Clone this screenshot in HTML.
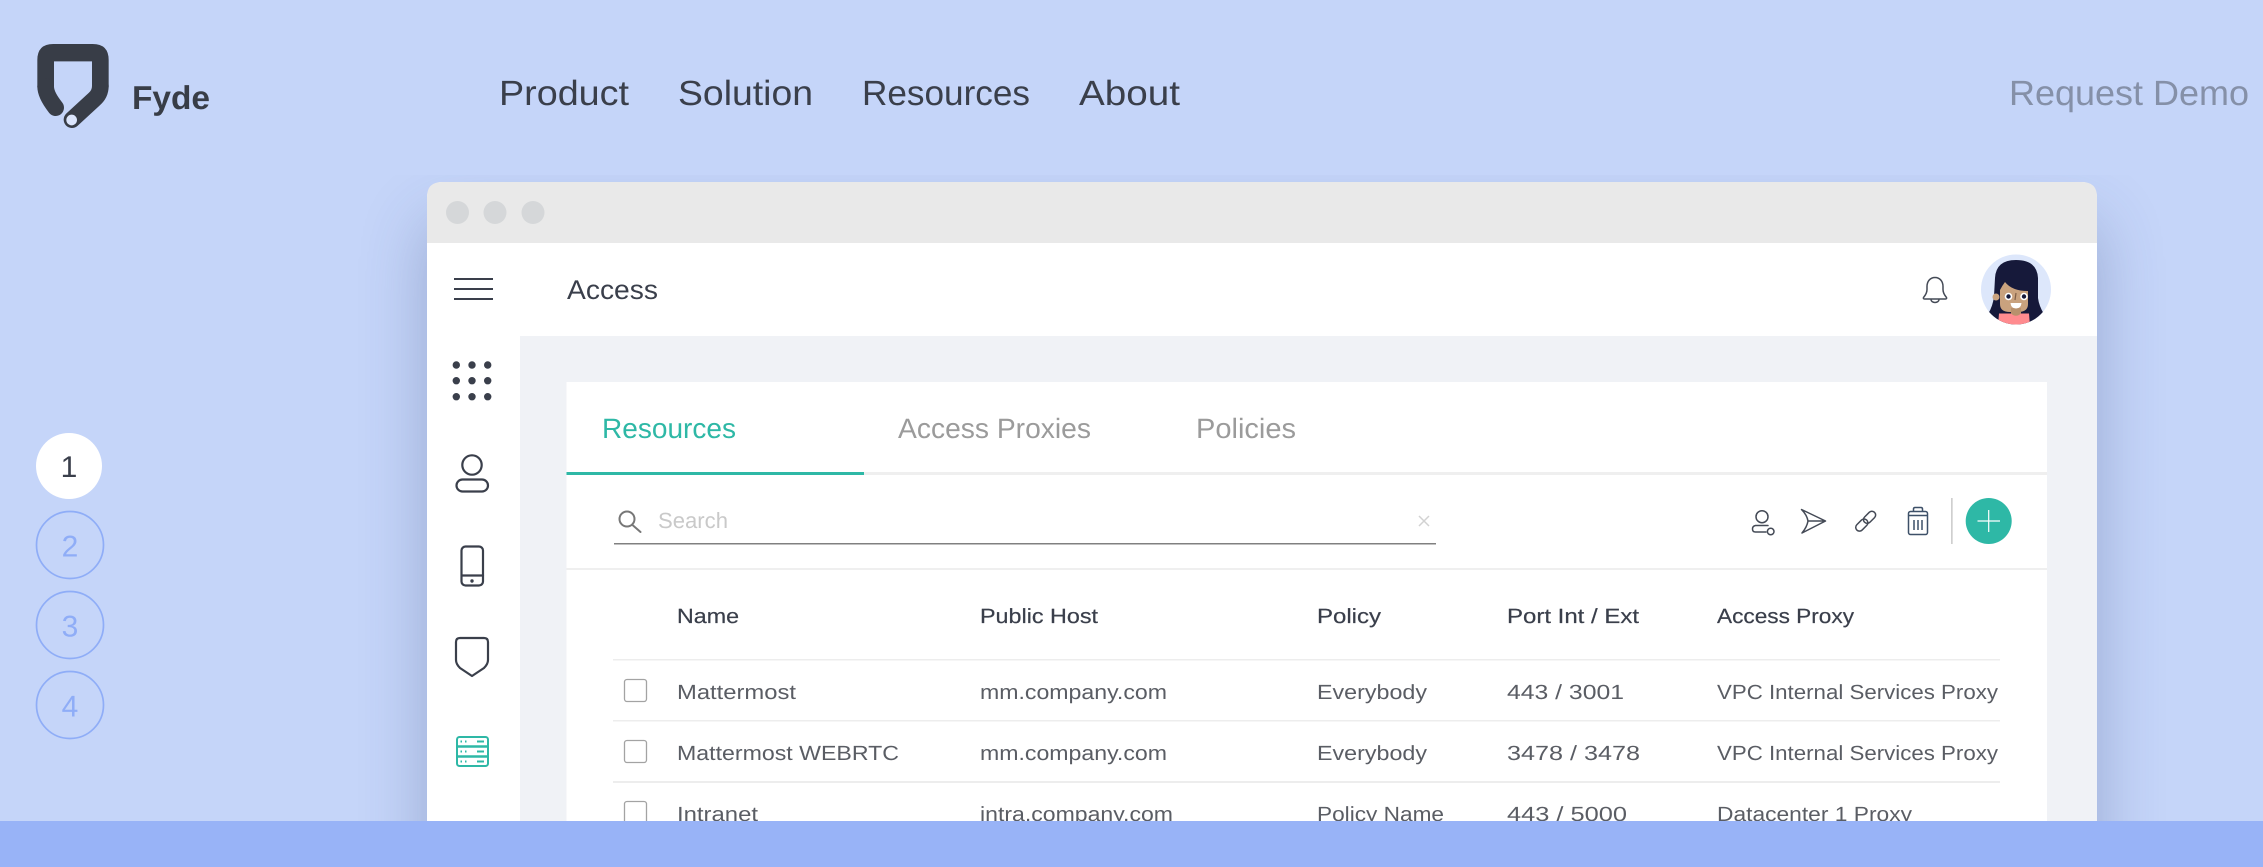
<!DOCTYPE html>
<html lang="en">
<head>
<meta charset="utf-8">
<title>Fyde</title>
<style>
html,body{margin:0;padding:0;width:2263px;height:867px;overflow:hidden;background:#c5d5f9;font-family:"Liberation Sans",sans-serif}
#root{position:relative;width:2263px;height:867px;overflow:hidden;background:#c5d5f9}
#clip{position:absolute;left:0;top:175px;width:2263px;height:692px;overflow:hidden}
#win{position:absolute;left:427px;top:7px;width:1670px;height:685px;border-radius:15px 15px 0 0;background:#fff;box-shadow:0 40px 66px rgba(50,65,120,.3)}
svg{position:absolute;left:0;top:0}
text{font-family:"Liberation Sans",sans-serif;text-rendering:geometricPrecision}
.nav{font-size:35px;fill:#3a3f4b}
.th{font-size:20.500px;fill:#3a3f4b;stroke:#3a3f4b;stroke-width:.2}
.td{font-size:20.500px;fill:#5a5d64}
.tab{font-size:28px;fill:#9b9b9b}
.ic{fill:none;stroke:#3a3f4b;stroke-width:2.200;stroke-linejoin:round;stroke-linecap:round}
.ti{fill:none;stroke:#444a56;stroke-width:1.500;stroke-linejoin:round;stroke-linecap:round}
.step{font-size:30px;fill:#8fadf7;text-anchor:middle}
</style>
</head>
<body>
<div id="root">
<div id="clip"><div id="win"></div></div>
<svg width="2263" height="867" viewBox="0 0 2263 867" xmlns="http://www.w3.org/2000/svg">
  <!-- Logo -->
  <g transform="translate(20 30) scale(.33333)">
    <path fill="#383d47" d="M100 42H218Q266 42 266 90V172H216V94H102V172H52V90Q52 42 100 42Z"/>
    <path fill="none" stroke="#383d47" stroke-width="50" stroke-linecap="round" d="M77 170Q77 195 107 233"/>
    <path fill="none" stroke="#383d47" stroke-width="50" stroke-linecap="round" d="M241 168Q241 192 222 208L156 269"/>
    <circle cx="155" cy="270" r="16" fill="#dbe5fc"/>
  </g>
  <text x="132" y="109" font-size="33" font-weight="700" fill="#383d47" textLength="78" lengthAdjust="spacingAndGlyphs">Fyde</text>

  <!-- Nav -->
  <text class="nav" x="499" y="105" textLength="130" lengthAdjust="spacingAndGlyphs">Product</text>
  <text class="nav" x="678" y="105" textLength="135" lengthAdjust="spacingAndGlyphs">Solution</text>
  <text class="nav" x="862" y="105" textLength="168" lengthAdjust="spacingAndGlyphs">Resources</text>
  <text class="nav" x="1079" y="105" textLength="101" lengthAdjust="spacingAndGlyphs">About</text>
  <text x="2009" y="105" font-size="35" fill="#8590a8" textLength="240" lengthAdjust="spacingAndGlyphs">Request Demo</text>

  <!-- Steps -->
  <circle cx="69" cy="466" r="33" fill="#fff"/>
  <text x="69" y="477" font-size="30" text-anchor="middle" fill="#3a3f4b">1</text>
  <g fill="none" stroke="#8fadf7" stroke-width="1.700">
    <circle cx="70" cy="545" r="33.500"/>
    <circle cx="70" cy="625" r="33.500"/>
    <circle cx="70" cy="705" r="33.500"/>
  </g>
  <text class="step" x="70" y="556.500">2</text>
  <text class="step" x="70" y="636.500">3</text>
  <text class="step" x="70" y="716.500">4</text>

  <!-- Window chrome -->
  <path d="M427 243V197Q427 182 442 182H2082Q2097 182 2097 197V243Z" fill="#e9e9e9"/>
  <circle cx="457.500" cy="212.500" r="11.500" fill="#d5d7d9"/>
  <circle cx="495" cy="212.500" r="11.500" fill="#d5d7d9"/>
  <circle cx="533" cy="212.500" r="11.500" fill="#d5d7d9"/>

  <!-- Content bg -->
  <rect x="520" y="336" width="1577" height="500" fill="#f0f2f6"/>
  <rect x="566.500" y="382" width="1480.500" height="460" fill="#fff"/>

  <!-- Header -->
  <g stroke="#3a3f4b" stroke-width="2">
    <path d="M454 279H493M454 289H493M454 299H493"/>
  </g>
  <text x="567" y="299" font-size="27" fill="#3a3f4b" textLength="91" lengthAdjust="spacingAndGlyphs">Access</text>

  <!-- Bell -->
  <path class="ti" d="M1935 277.500c-5 0-8 4-8 9v3c0 4-2 6-3.500 8q-.5 1.500 1 1.500h21q1.500 0 1-1.500c-1.500-2-3.500-4-3.500-8v-3c0-5-3-9-8-9zM1931 299.500a4 3 0 0 0 8 0"/>

  <!-- Avatar -->
  <clipPath id="av"><circle cx="2016" cy="289.500" r="35"/></clipPath>
  <circle cx="2016" cy="289.500" r="35" fill="#dde7fb"/>
  <g clip-path="url(#av)">
    <path fill="#16193a" d="M1995 278Q1996 260 2016 260Q2037 260 2038 278V298Q2039 306 2044 314L2040 328H1990L1988 314Q1993 306 1994 296Z"/>
    <circle cx="1996" cy="297" r="3.500" fill="#c9a27e"/>
    <path fill="#c9a27e" d="M2000 290Q2002 286 2005 282Q2012 291 2028 291V304Q2028 312 2018 312H2010Q2000 312 2000 304Z"/>
    <rect x="2011" y="308" width="10" height="9" fill="#b8916d"/>
    <path fill="#ff8b8f" d="M1999 313.500H2011Q2016 318 2021 313.500H2029L2030 326H1998Z"/>
    <circle cx="2008.500" cy="296.500" r="3.800" fill="#fff"/><circle cx="2024" cy="296.500" r="3.800" fill="#fff"/>
    <circle cx="2008.500" cy="296.500" r="2.200" fill="#16193a"/><circle cx="2024" cy="296.500" r="2.200" fill="#16193a"/>
    <path d="M2016 293L2015 300" stroke="#7f5f47" stroke-width="1.200" fill="none"/>
    <path d="M2010.500 303H2021.500Q2021 308.500 2016 308.500Q2011 308.500 2010.500 303Z" fill="#fff"/>
  </g>

  <!-- Sidebar -->
  <g fill="#3a3f4b">
    <circle cx="456.300" cy="365" r="3.700"/><circle cx="472" cy="365" r="3.700"/><circle cx="487.700" cy="365" r="3.700"/>
    <circle cx="456.300" cy="380.700" r="3.700"/><circle cx="472" cy="380.700" r="3.700"/><circle cx="487.700" cy="380.700" r="3.700"/>
    <circle cx="456.300" cy="396.700" r="3.700"/><circle cx="472" cy="396.700" r="3.700"/><circle cx="487.700" cy="396.700" r="3.700"/>
  </g>
  <circle class="ic" cx="472" cy="465" r="9.700"/>
  <rect class="ic" x="456.500" y="479.500" width="31.500" height="12" rx="6"/>
  <rect class="ic" x="461.500" y="546.500" width="21.500" height="39" rx="4"/>
  <path class="ic" d="M462 575.500H483"/>
  <circle cx="472" cy="581" r="1.700" fill="#3a3f4b"/>
  <path class="ic" d="M460 638H484Q488 638 488 642V660Q488 664 484 668L472 676L460 668Q456 664 456 660V642Q456 638 460 638Z"/>
  <g fill="none" stroke="#2eb8a6" stroke-width="2">
    <rect x="457" y="737" width="31" height="29" rx="2.500"/>
    <path d="M457 746.500H488M457 756.500H488" stroke-width="2.500"/>
    <path d="M460.500 741.500h1.500M465 741.500h1.500M477 741.500h7M460.500 751.500h1.500M465 751.500h1.500M477 751.500h7M460.500 761.500h1.500M465 761.500h1.500M477 761.500h7"/>
  </g>

  <!-- Tabs -->
  <text x="602" y="438" font-size="28" fill="#2eb8a6" textLength="134" lengthAdjust="spacingAndGlyphs">Resources</text>
  <text class="tab" x="898" y="438" textLength="193" lengthAdjust="spacingAndGlyphs">Access Proxies</text>
  <text class="tab" x="1196" y="438" textLength="100" lengthAdjust="spacingAndGlyphs">Policies</text>
  <rect x="566.500" y="472" width="1480.500" height="3" fill="#efefef"/>
  <rect x="566.500" y="472" width="297.500" height="3" fill="#2eb8a6"/>

  <!-- Search -->
  <g fill="none" stroke="#777" stroke-width="2" stroke-linecap="round">
    <circle cx="627" cy="519" r="7.500"/><path d="M632.500 525L640.500 532"/>
  </g>
  <text x="658" y="528" font-size="22" fill="#c9c9c9" textLength="70" lengthAdjust="spacingAndGlyphs">Search</text>
  <path d="M1419 516L1429 526M1429 516L1419 526" stroke="#d2d2d2" stroke-width="1.500"/>
  <rect x="614" y="543" width="822" height="1.500" fill="#808080"/>

  <!-- Toolbar -->
  <circle class="ti" cx="1762" cy="516.700" r="6"/>
  <path class="ti" d="M1766 532H1755.500Q1752.500 532 1752.500 529T1755.500 525.500H1768"/>
  <circle class="ti" cx="1770.700" cy="531.500" r="3.300"/>
  <path class="ti" d="M1801.500 509.500L1825.500 521L1802 533Q1807 527 1808 521Q1807 515 1801.500 509.500ZM1808 521H1825.500"/>
  <g class="ti" transform="rotate(-45 1865.500 521)">
    <rect x="1853" y="517.500" width="14" height="7.500" rx="3.700"/>
    <rect x="1864" y="517.500" width="14" height="7.500" rx="3.700"/>
  </g>
  <g fill="none" stroke="#3d5068" stroke-width="1.500" stroke-linejoin="round">
    <rect x="1908.500" y="511.500" width="19" height="23" rx="2"/>
    <path d="M1913.500 511V509Q1913.500 507.500 1915 507.500H1921Q1922.500 507.500 1922.500 509V511M1908.500 515.500H1927.500M1914 520V530M1918 520V530M1922 520V530"/>
  </g>
  <rect x="1951" y="498" width="1.700" height="46" fill="#cfcfcf"/>
  <circle cx="1988.700" cy="521" r="23" fill="#2eb8a6"/>
  <path d="M1977.500 521H2000M1988.700 510V532" stroke="#fff" stroke-width="1.200"/>

  <rect x="566.500" y="568" width="1480.500" height="2" fill="#efefef"/>

  <!-- Table head -->
  <text class="th" x="677" y="623" textLength="62" lengthAdjust="spacingAndGlyphs">Name</text>
  <text class="th" x="980" y="623" textLength="118" lengthAdjust="spacingAndGlyphs">Public Host</text>
  <text class="th" x="1317" y="623" textLength="64" lengthAdjust="spacingAndGlyphs">Policy</text>
  <text class="th" x="1507" y="623" textLength="132" lengthAdjust="spacingAndGlyphs">Port Int / Ext</text>
  <text class="th" x="1717" y="623" textLength="137" lengthAdjust="spacingAndGlyphs">Access Proxy</text>

  <g fill="#ededed">
    <rect x="613" y="659" width="1387" height="1.500"/>
    <rect x="613" y="720" width="1387" height="1.500"/>
    <rect x="613" y="781" width="1387" height="2"/>
  </g>

  <!-- Checkboxes -->
  <g fill="#fff" stroke="#a3a3a3" stroke-width="1.300">
    <rect x="624.500" y="679.500" width="22" height="22" rx="2.500"/>
    <rect x="624.500" y="740.500" width="22" height="22" rx="2.500"/>
    <rect x="624.500" y="801.500" width="22" height="22" rx="2.500"/>
  </g>

  <!-- Rows -->
  <text class="td" x="677" y="699" textLength="119" lengthAdjust="spacingAndGlyphs">Mattermost</text>
  <text class="td" x="980" y="699" textLength="187" lengthAdjust="spacingAndGlyphs">mm.company.com</text>
  <text class="td" x="1317" y="699" textLength="110" lengthAdjust="spacingAndGlyphs">Everybody</text>
  <text class="td" x="1507" y="699" textLength="117" lengthAdjust="spacingAndGlyphs">443 / 3001</text>
  <text class="td" x="1717" y="699" textLength="281" lengthAdjust="spacingAndGlyphs">VPC Internal Services Proxy</text>

  <text class="td" x="677" y="760" textLength="222" lengthAdjust="spacingAndGlyphs">Mattermost WEBRTC</text>
  <text class="td" x="980" y="760" textLength="187" lengthAdjust="spacingAndGlyphs">mm.company.com</text>
  <text class="td" x="1317" y="760" textLength="110" lengthAdjust="spacingAndGlyphs">Everybody</text>
  <text class="td" x="1507" y="760" textLength="133" lengthAdjust="spacingAndGlyphs">3478 / 3478</text>
  <text class="td" x="1717" y="760" textLength="281" lengthAdjust="spacingAndGlyphs">VPC Internal Services Proxy</text>

  <text class="td" x="677" y="821" textLength="81" lengthAdjust="spacingAndGlyphs">Intranet</text>
  <text class="td" x="980" y="821" textLength="193" lengthAdjust="spacingAndGlyphs">intra.company.com</text>
  <text class="td" x="1317" y="821" textLength="127" lengthAdjust="spacingAndGlyphs">Policy Name</text>
  <text class="td" x="1507" y="821" textLength="120" lengthAdjust="spacingAndGlyphs">443 / 5000</text>
  <text class="td" x="1717" y="821" textLength="195" lengthAdjust="spacingAndGlyphs">Datacenter 1 Proxy</text>

  <rect x="0" y="821" width="2263" height="46" fill="#98b3f7"/>
</svg>
</div>
</body>
</html>
